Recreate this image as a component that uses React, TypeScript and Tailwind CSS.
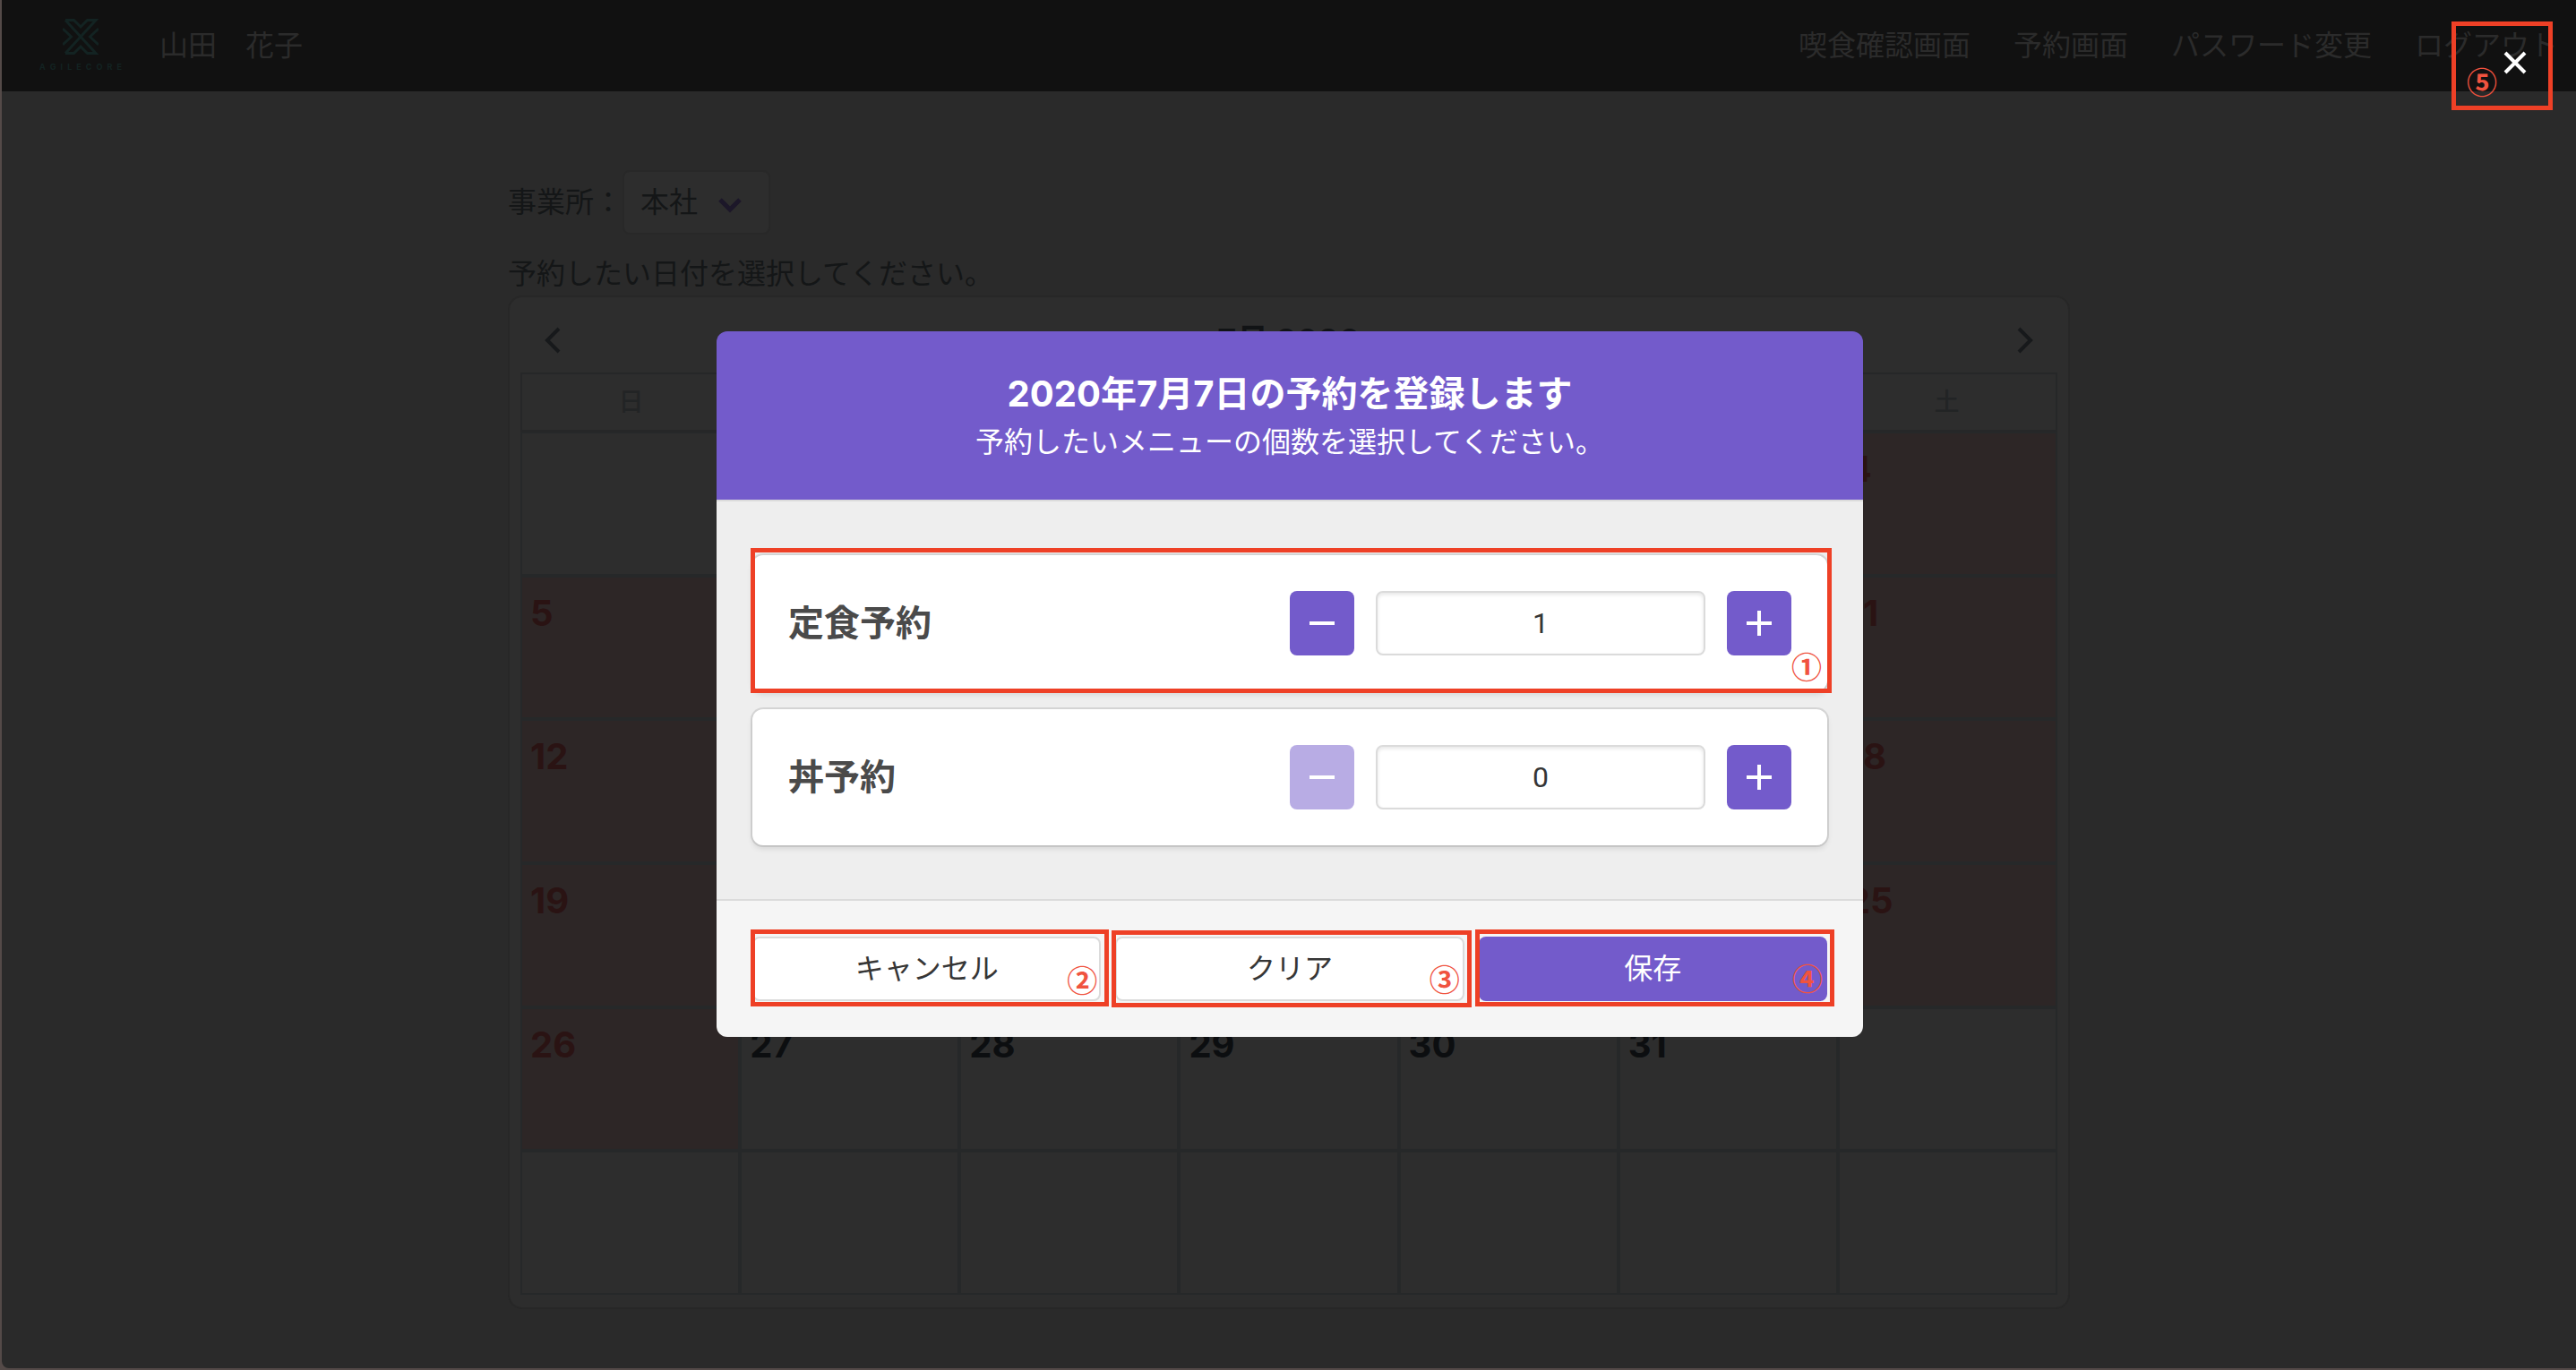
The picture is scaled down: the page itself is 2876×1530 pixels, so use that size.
import React from "react";

const CIRCLED = ["①", "②", "③", "④", "⑤"];

function Callout({ n, box, mark }: { n: number; box: string; mark: string }) {
  return (
    <span aria-hidden="true" className={`pointer-events-none absolute z-10 border-[5px] border-[#ee4026] ${box}`}>
      <span className={`absolute font-['Noto_Sans_CJK_JP',sans-serif] text-[34px] leading-[34px] font-bold text-[#f0533f] ${mark}`}>
        {CIRCLED[n - 1]}
      </span>
    </span>
  );
}

const NAV = ["喫食確認画面", "予約画面", "パスワード変更", "ログアウト"];

function Header() {
  return (
    <header className="flex h-[102px] items-center bg-[#111111] pr-5 pl-[42px] text-[32px] leading-[48px] text-[#2b2b2b]">
      <a href="#" aria-label="AGILECORE" className="flex w-[92px] flex-col items-center gap-[10px] pb-[2px]">
        <svg viewBox="0 0 40 40" className="h-10 w-10" fill="none" stroke="#132322" strokeWidth="3">
          <path d="M3 1.5H12.5L20 9L27.5 1.5H37L3 38.5" />
          <path d="M3 1.5L37 38.5H27.5L20 31L12.5 38.5H3" />
          <path d="M0 11L9.5 20L0 29" />
          <path d="M40 11L30.5 20L40 29" />
        </svg>
        <span className="flex w-full justify-between font-['Inter',sans-serif] text-[9px] leading-[8px] font-bold text-[#132322]">
          {"AGILECORE".split("").map((c, i) => (
            <span key={i}>{c}</span>
          ))}
        </span>
      </a>
      <span className="ml-[42px] whitespace-pre">山田　花子</span>
      <nav className="ml-auto flex gap-12">
        {NAV.map((t) => (
          <a key={t} href="#">{t}</a>
        ))}
      </nav>
    </header>
  );
}

function Chevron({ d, className }: { d: string; className: string }) {
  return (
    <svg viewBox="0 0 32 32" className={className} fill="none" stroke="currentColor" aria-hidden="true">
      <path d={d} />
    </svg>
  );
}

const WEEKDAYS = ["日", "月", "火", "水", "木", "金", "土"];
const WEEKS = Array.from({ length: 6 }, (_, w) =>
  Array.from({ length: 7 }, (_, d) => {
    const day = w * 7 + d - 2;
    return day >= 1 && day <= 31 ? day : null;
  }),
);

function Calendar() {
  return (
    <section className="rounded-2xl border-2 border-[#272727] bg-[#2d2d2d] px-3 pb-[14px]">
      <div className="flex h-[84px] items-center justify-between px-5 pt-[12px] text-[#17191b]">
        <button type="button" aria-label="前の月"><Chevron d="M23 3L10 16L23 29" className="h-8 w-8 stroke-4" /></button>
        <h2 className="text-[36px] leading-[40px] font-bold text-[#111315]">7月 2020</h2>
        <button type="button" aria-label="次の月"><Chevron d="M9 3L22 16L9 29" className="h-8 w-8 stroke-4" /></button>
      </div>
      <table className="h-[1030px] w-full table-fixed border-separate border-spacing-0">
        <thead>
          <tr className="h-[66px]">
            {WEEKDAYS.map((d) => (
              <th key={d} className="border-y-2 border-[#262728] p-0 text-[28px] leading-[40px] font-medium text-[#222425] first:border-l-2 last:border-r-2">
                {d}
              </th>
            ))}
          </tr>
        </thead>
        <tbody>
          {WEEKS.map((week, w) => (
            <tr key={w} className="h-[160px]">
              {week.map((day, d) => {
                const off = day !== null && (d === 0 || d === 6);
                return (
                  <td
                    key={d}
                    className={`border-2 border-[#262829] px-[9px] pt-4 pb-0 align-top text-[40px] leading-[48px] font-bold ${off ? "bg-[#2d2626] text-[#2a1313]" : "text-[#0c0e10]"}`}
                  >
                    {day}
                  </td>
                );
              })}
            </tr>
          ))}
        </tbody>
      </table>
    </section>
  );
}

function StepButton({ plus, disabled, label }: { plus?: boolean; disabled?: boolean; label: string }) {
  return (
    <button
      type="button"
      aria-label={label}
      disabled={disabled}
      className="flex size-[72px] items-center justify-center rounded-lg bg-[#735bcb] text-white disabled:opacity-50"
    >
      <svg viewBox="0 0 28 28" className="size-7" stroke="currentColor" strokeWidth="4" aria-hidden="true">
        <path d={plus ? "M0 14H28M14 0V28" : "M0 14H28"} />
      </svg>
    </button>
  );
}

function MenuRow({ id, name, value, children }: { id: string; name: string; value: number; children?: React.ReactNode }) {
  return (
    <div className="relative flex items-center gap-6 rounded-xl bg-white p-10 shadow-[0_4px_6px_rgba(10,10,10,0.1),0_0_0_2px_rgba(10,10,10,0.1)]">
      <label htmlFor={id} className="flex-1 text-[40px] leading-[60px] font-bold text-[#4a4a4a]">{name}</label>
      <StepButton label={`${name}を減らす`} disabled={value === 0} />
      <input
        id={id}
        type="text"
        defaultValue={value}
        className="h-[72px] w-[368px] rounded-lg border-2 border-[#dbdbdb] bg-white text-center font-['Roboto',sans-serif] text-[32px] text-[#363636] shadow-[inset_0_2px_4px_rgba(10,10,10,0.1)]"
      />
      <StepButton plus label={`${name}を増やす`} />
      {children}
    </div>
  );
}

function Modal() {
  return (
    <div role="dialog" aria-modal="true" aria-labelledby="dialog-title" className="w-[1280px] max-w-full overflow-hidden rounded-xl">
      <header className="bg-[#735bcb] py-10 text-center text-white">
        <h1 id="dialog-title" className="text-[40px] leading-[60px] font-bold">2020年7月7日の予約を登録します</h1>
        <p className="text-[32px] leading-[48px]">予約したいメニューの個数を選択してください。</p>
      </header>
      <div className="flex flex-col gap-5 border-y-2 border-[#dbdbdb] bg-[#eeeeee] px-10 py-[60px]">
        <MenuRow id="teishoku" name="定食予約" value={1}>
          <Callout n={1} box="-top-2 -right-[5px] -bottom-[2px] -left-[2px]" mark="right-[6px] bottom-2" />
        </MenuRow>
        <MenuRow id="donburi" name="丼予約" value={0} />
      </div>
      <footer className="grid grid-cols-3 gap-4 bg-[#f5f5f5] p-10 text-[32px] text-[#363636]">
        <div className="relative">
          <button type="button" className="h-[72px] w-full rounded-lg border-2 border-[#dbdbdb] bg-white">キャンセル</button>
          <Callout n={2} box="-top-2 -right-[9px] -bottom-[6px] -left-[2px]" mark="right-2 bottom-2" />
        </div>
        <div className="relative">
          <button type="button" className="h-[72px] w-full rounded-lg border-2 border-[#dbdbdb] bg-white">クリア</button>
          <Callout n={3} box="-top-[7px] -right-2 -bottom-[7px] -left-1" mark="right-2 bottom-[10px]" />
        </div>
        <div className="relative">
          <button type="button" className="h-[72px] w-full rounded-lg bg-[#735bcb] text-white">保存</button>
          <Callout n={4} box="-top-2 -right-2 -bottom-[6px] -left-1" mark="right-2 bottom-[10px]" />
        </div>
      </footer>
    </div>
  );
}

export default function App() {
  return (
    <div className="relative min-h-screen bg-[#544a48] pb-[2px] pl-[2px] font-['Inter','Noto_Sans_CJK_JP',sans-serif]">
      <div className="min-h-[calc(100vh-2px)] overflow-hidden rounded-bl-lg bg-[#2a2a2a]">
        <Header />
        <main className="mx-auto w-[1744px] max-w-full pt-[88px] pb-[60px]">
          <div className="flex items-center text-[32px] leading-[48px] text-[#141617]">
            <label htmlFor="office">事業所：</label>
            <div className="relative">
              <select id="office" className="h-[72px] w-[165px] appearance-none rounded-lg border-2 border-[#282828] bg-[#2d2d2d] pl-[18px]">
                <option>本社</option>
              </select>
              <Chevron d="M5 11L16 22L27 11" className="pointer-events-none absolute top-[22px] right-[29px] h-8 w-8 stroke-[5px] text-[#1c1729]" />
            </div>
          </div>
          <p className="pt-5 text-[32px] leading-[48px] text-[#141617]">予約したい日付を選択してください。</p>
          <Calendar />
        </main>
      </div>
      <div className="absolute inset-0 flex items-center justify-center pb-[2px] pl-1">
        <Modal />
        <div className="absolute top-6 right-[26px] h-[99px] w-[113px]">
          <button type="button" aria-label="閉じる" className="absolute top-[33px] right-[29px] text-white">
            <svg viewBox="0 0 26 26" className="size-[26px]" stroke="currentColor" strokeWidth="4" aria-hidden="true">
              <path d="M2 2L24 24M24 2L2 24" />
            </svg>
          </button>
          <Callout n={5} box="inset-0" mark="bottom-[10px] left-3" />
        </div>
      </div>
    </div>
  );
}
